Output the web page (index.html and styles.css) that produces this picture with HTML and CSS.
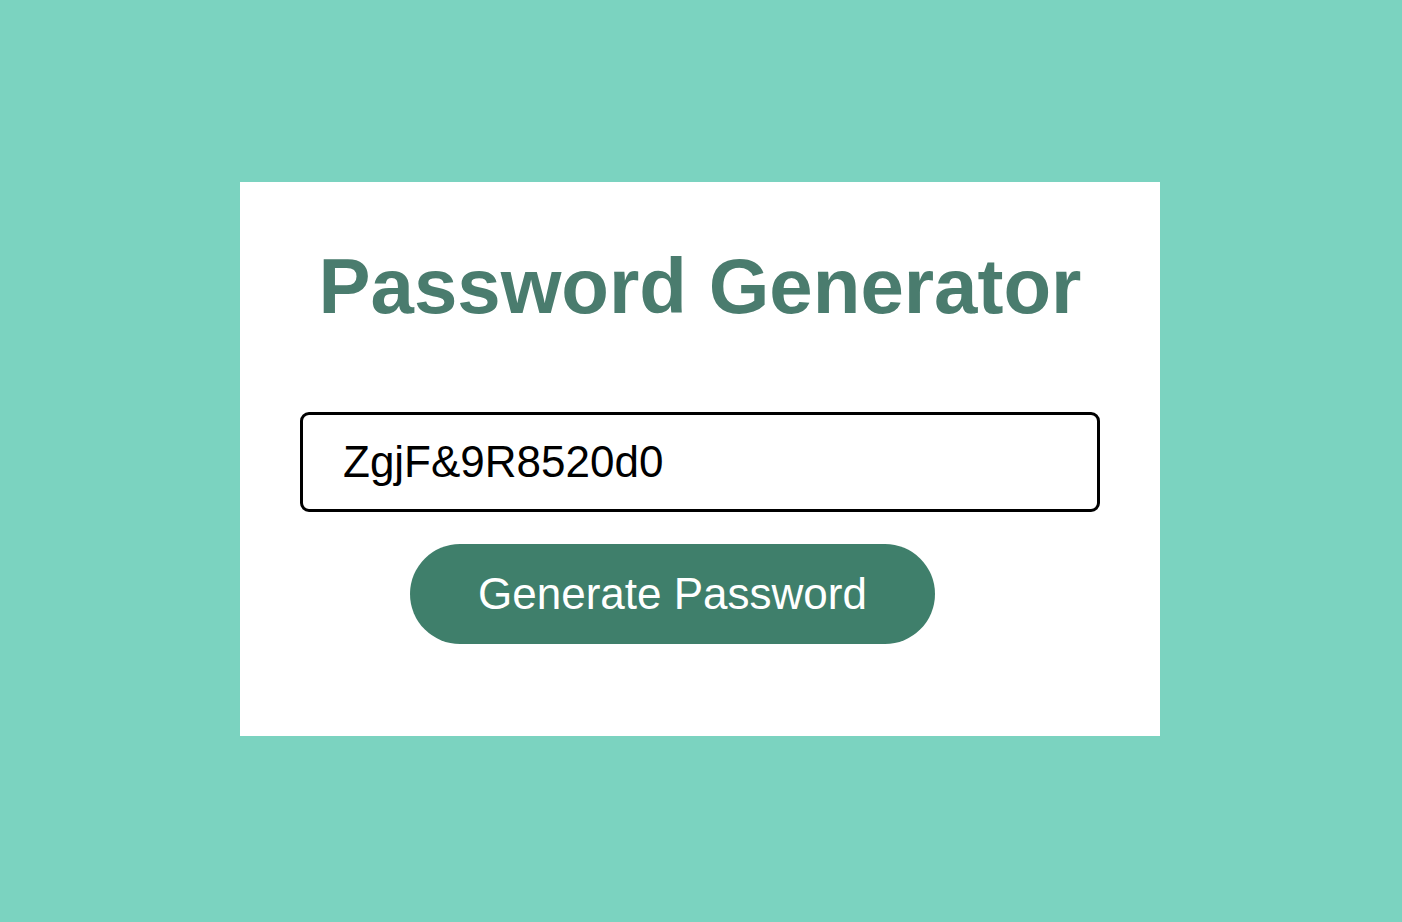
FILE: index.html
```html
<!DOCTYPE html>
<html lang="en">
<head>
<meta charset="utf-8">
<title>Password Generator</title>
<link rel="stylesheet" href="styles.css">
</head>
<body>
<main class="page">
  <section class="card">
    <h1 class="title">Password Generator</h1>
    <div class="field">
      <input class="output" type="text" value="ZgjF&amp;9R8520d0" readonly>
    </div>
    <div class="actions">
      <button class="generate" type="button">Generate Password</button>
    </div>
  </section>
</main>
</body>
</html>
```

FILE: styles.css
```css
* { box-sizing: border-box; }

html, body {
  margin: 0;
  padding: 0;
  background: #7bd3c0;
  font-family: "Liberation Sans", Arial, Helvetica, sans-serif;
}

.page {
  min-height: 922px;
  display: flex;
  justify-content: center;
  align-items: flex-start;
  padding-top: 182px;
  padding-right: 2px;
}

.card {
  width: 920px;
  height: 554px;
  background: #ffffff;
  padding: 65px 60px 0;
  display: flex;
  flex-direction: column;
}

.title {
  margin: 0;
  font-size: 78px;
  line-height: 1;
  font-weight: 700;
  color: #4a7c6e;
  text-align: center;
}

.field {
  margin-top: 87px;
}

.output {
  display: block;
  width: 800px;
  height: 100px;
  border: 3px solid #000;
  border-radius: 9px;
  padding: 0 40px;
  font-family: "Liberation Sans", Arial, Helvetica, sans-serif;
  font-size: 44px;
  color: #000;
  background: #fff;
  outline: none;
}

.actions {
  margin-top: 32px;
  padding-left: 110px;
  display: flex;
}

.generate {
  width: 525px;
  height: 100px;
  border: none;
  border-radius: 50px;
  background: #3f7f6b;
  color: #fff;
  font-family: "Liberation Sans", Arial, Helvetica, sans-serif;
  font-size: 44px;
  padding: 0;
  cursor: pointer;
}
```
